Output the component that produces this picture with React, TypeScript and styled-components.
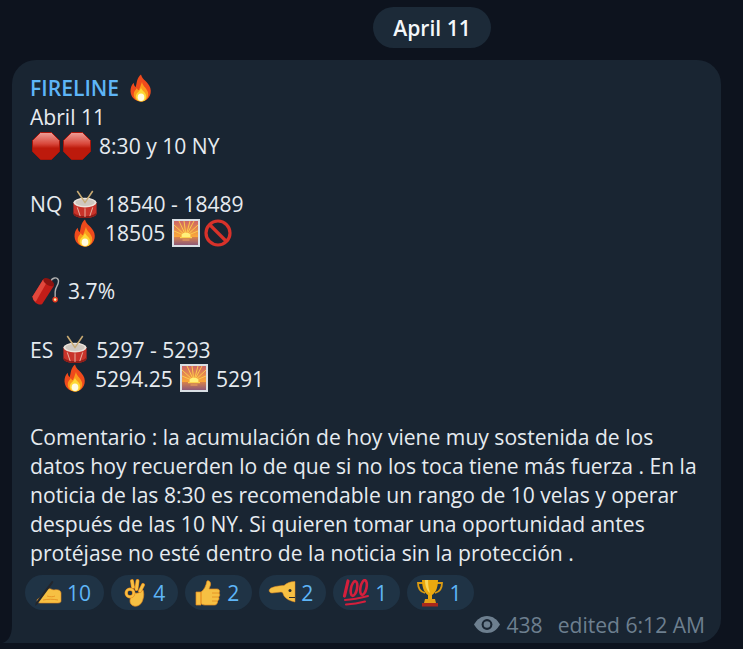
import React from 'react'
import styled, { createGlobalStyle } from 'styled-components'

const colors = {
  page: '#0d131e',
  bubble: '#192532',
  text: '#e6ebf0',
  link: '#5eb5f7',
  pill: '#1f3345',
  meta: '#6d7f8f',
  datePill: '#1c2a38'
}

const GlobalStyle = createGlobalStyle`
  html, body {
    margin: 0;
    padding: 0;
    background: ${colors.page};
    overflow: hidden;
  }
  body {
    font-family: "Open Sans", "DejaVu Sans", sans-serif;
    font-size: 21.1px;
  }
`

const Page = styled.main`
  width: 743px;
  height: 649px;
  display: flex;
  flex-direction: column;
  padding: 7px 22px 6px 12px;
  box-sizing: border-box;
`

const DatePill = styled.div`
  align-self: flex-start;
  margin-left: 361px;
  height: 41px;
  width: 118px;
  border-radius: 21px;
  background: ${colors.datePill};
  color: #f4f7fa;
  font-weight: 600;
  display: flex;
  align-items: center;
  justify-content: center;
`

const Bubble = styled.article`
  position: relative;
  margin-top: 12px;
  flex: 1;
  background: ${colors.bubble};
  border-radius: 24px 24px 24px 0;
  padding: 13px 18px 0 18px;
  display: flex;
  flex-direction: column;
`

const Tail = styled.svg`
  position: absolute;
  left: -10px;
  bottom: 0;
`

const Sender = styled.div`
  height: 29px;
  display: flex;
  align-items: center;
  gap: 8px;
  color: ${colors.link};
  font-weight: 600;
`

const Body = styled.div`
  color: ${colors.text};
`

const Line = styled.div<{ $indent?: number }>`
  height: 29.07px;
  display: flex;
  align-items: center;
  white-space: pre;
  padding-left: ${p => p.$indent ?? 0}px;
`

const Emoji = styled.svg<{ $left?: number; $right?: number }>`
  flex: none;
  width: 28px;
  height: 28px;
  margin-left: ${p => p.$left ?? 0}px;
  margin-right: ${p => p.$right ?? 0}px;
`

const Reactions = styled.div`
  display: flex;
  gap: 7px;
  margin: 8px 0 0 -5px;
`

const Reaction = styled.div`
  height: 35px;
  padding: 0 13px 0 9px;
  border-radius: 18px;
  background: ${colors.pill};
  color: ${colors.link};
  display: flex;
  align-items: center;
  gap: 5px;
`

const ReactionIcon = styled.svg`
  flex: none;
  width: 28px;
  height: 28px;
`

const Meta = styled.div`
  margin: 0 -2px 0 0;
  display: flex;
  justify-content: flex-end;
  align-items: center;
  color: ${colors.meta};
  height: 28px;
`

const Views = styled.span`
  display: inline-flex;
  align-items: center;
  gap: 6px;
  margin-right: 15px;
`

interface IEmojiProps {
  left?: number
  right?: number
}

const Flame: React.FC<IEmojiProps> = ({ left, right }) => (
  <Emoji viewBox="1.5 .5 25 27" $left={left} $right={right}>
    <path d="M14 1c1 5 7 7 9 13 2 7-3 13-9 13S3 22 4 15c.5-3 2-5 3-6 0 2 1 4 2 4 1-4 1-9 5-12z" fill="#ef4a1c" />
    <path d="M15 8c0 4 6 7 6 12 0 4-3 7-7 7s-7-3-7-7c0-3 2-4 3-6 .5 1 1 2 2 2 1-2 2-5 3-8z" fill="#fb9a1d" />
    <path d="M14 14c1 3 5 4 5 8s-2 5-5 5-5-2-5-5 4-5 5-8z" fill="#fdd835" />
    <ellipse cx="14" cy="23" rx="3.2" ry="3.6" fill="#fffbe0" />
  </Emoji>
)

const Stop: React.FC<IEmojiProps> = ({ left, right }) => (
  <Emoji viewBox="0 0 28 28" $left={left} $right={right}>
    <defs>
      <linearGradient id="stopFill" x1="0" y1="0" x2="0" y2="1">
        <stop offset="0" stopColor="#ee9f98" />
        <stop offset="0.42" stopColor="#d8473b" />
        <stop offset="0.58" stopColor="#bd1a0c" />
        <stop offset="1" stopColor="#bd1a0c" />
      </linearGradient>
    </defs>
    <path d="M8.5 .5h11l8 8v11l-8 8h-11l-8-8v-11z" fill="url(#stopFill)" stroke="#a8150a" />
  </Emoji>
)

const Drum: React.FC<IEmojiProps> = ({ left, right }) => (
  <Emoji viewBox="1 0 26 29" $left={left} $right={right}>
    <path d="M6 1l8 12M22 1l-8 12" stroke="#c9ab73" strokeWidth="1.6" />
    <path d="M2 13v11c0 3 5 5 12 5s12-2 12-5V13z" fill="#c9332a" />
    <path d="M2 22c0 3 5 5 12 5s12-2 12-5v2c0 3-5 5-12 5S2 27 2 24z" fill="#8e1d18" />
    <path d="M6 18l3 9M14 19v9M22 18l-3 9" stroke="#e9b4a4" strokeWidth="1" />
    <ellipse cx="14" cy="13" rx="12" ry="5" fill="#ece4dc" />
    <ellipse cx="14" cy="13" rx="10" ry="3.6" fill="#cfc8c0" />
    <path d="M10.500 8l3.500 5 3.500-5" stroke="#c9ab73" strokeWidth="1.400" fill="none" />
  </Emoji>
)

const Sunrise: React.FC<IEmojiProps> = ({ left, right }) => (
  <Emoji viewBox="0 0 28 28" $left={left} $right={right}>
    <defs>
      <linearGradient id="sunSky" x1="0" y1="0" x2="0" y2="1">
        <stop offset="0" stopColor="#c9606a" />
        <stop offset="0.62" stopColor="#f9a63a" />
      </linearGradient>
      <linearGradient id="sunSea" x1="0" y1="0" x2="0" y2="1">
        <stop offset="0" stopColor="#d9824a" />
        <stop offset="1" stopColor="#8e5a78" />
      </linearGradient>
    </defs>
    <rect x="1" y="1" width="26" height="26" fill="url(#sunSky)" stroke="#d9dfe4" strokeWidth="2" />
    <path
      d="M14 17L2 6M14 17L7 2M14 17l-2-15M14 17l4-15M14 17l8-15M14 17L26 6M14 17L2 12M14 17l12-5"
      stroke="#fcc94d"
      strokeWidth="1"
    />
    <ellipse cx="14" cy="17" rx="4.5" ry="3.2" fill="#fff07a" />
    <rect x="2" y="18" width="24" height="8" fill="url(#sunSea)" />
    <rect x="8" y="18" width="12" height="1.2" fill="#fbd24e" />
    <rect x="10.500" y="20.500" width="7" height="1" fill="#f0a85a" />
  </Emoji>
)

const NoEntry: React.FC<IEmojiProps> = ({ left, right }) => (
  <Emoji viewBox="0 0 28 28" $left={left} $right={right}>
    <circle cx="14" cy="14" r="12" fill="none" stroke="#d8322a" strokeWidth="3.2" />
    <path d="M6 6l16 16" stroke="#d8322a" strokeWidth="3.2" />
  </Emoji>
)

const Dynamite: React.FC<IEmojiProps> = ({ left, right }) => (
  <Emoji viewBox="1 1 25 26" $left={left} $right={right}>
    <path d="M18 5c1-3.500 6-4.500 7-1 1 4-3 6-3 11v5" fill="none" stroke="#b0b0b0" strokeWidth="1.300" />
    <path d="M11 3l10 6-11 17c-3 2-9-2-9-7z" fill="#c21d18" />
    <path d="M11 3l3.500 2.500L4 24c-2-1-3-3-3-5z" fill="#e2483c" />
    <ellipse cx="16" cy="5.800" rx="5.700" ry="2.800" transform="rotate(32 16 5.800)" fill="#8c1410" />
    <circle cx="22" cy="22" r="2.600" fill="#e93a20" />
    <circle cx="22" cy="22" r="1.200" fill="#fff2a8" />
  </Emoji>
)

const hand = '#f6c043'
const handEdge = '#e58a1e'

const Writing = () => (
  <ReactionIcon viewBox="0 0 28 28">
    <path d="M4 20c3-1 6-7 10-10 3-1 4 1 6 1 3-1 7 0 7 3v8c0 1-1 2-3 2H6c-2 0-3-1-3-2s0-1.500 1-2z" fill={hand} stroke={handEdge} strokeWidth=".6" />
    <path d="M9 21c5-1 10-1 15 0M13 17c3 1 6 1 8 0" fill="none" stroke={handEdge} strokeWidth=".8" />
    <path d="M1 27l.8-3.500L17.500 2.500c1-1 2.300 0 1.600 1.200L3.500 25z" fill="#22262c" />
  </ReactionIcon>
)

const OkHand = () => (
  <ReactionIcon viewBox="0 0 28 28">
    <path d="M15 14c0 0 4 1 6-2l2-1c1 3 1 6 0 9-1 5-5 8-9 7-4-1-5-5-3-9z" fill={hand} stroke={handEdge} strokeWidth=".7" />
    <path d="M13 8l-1-6M16.500 10l1-8M20 12l3-6" stroke={handEdge} strokeWidth="3.800" strokeLinecap="round" />
    <path d="M13 8l-1-6M16.500 10l1-8M20 12l3-6" stroke={hand} strokeWidth="2.600" strokeLinecap="round" />
    <circle cx="10" cy="14" r="3.800" fill={colors.pill} stroke={handEdge} strokeWidth="3.200" />
    <circle cx="10" cy="14" r="3.800" fill="none" stroke={hand} strokeWidth="2" />
  </ReactionIcon>
)

const ThumbsUp = () => (
  <ReactionIcon viewBox="-1 0 28 28">
    <path d="M1 13h5v13H1zM6 13c3-2 5-6 6-11 2-1 4 1 3.500 4L14 10h8c3 0 3 3 2 4 1 1.500 1 3-.5 4 1 1.500.5 3-1 4 .5 2-1 4-3 4H10c-2 0-4-1-4-2z" fill={hand} stroke={handEdge} strokeWidth=".7" />
    <path d="M17 14h7M17 18h6M17 22h5" stroke={handEdge} strokeWidth=".8" />
  </ReactionIcon>
)

const PointingFace = () => (
  <ReactionIcon viewBox="0 0 28 28">
    <path d="M27 2.500c-5 0-8 1.500-11 4-4 0-10 1-13 2.500-3 1.500-2 5 1 5 3 0 6-1 9-1 2 0 2 2 3 4 2 3 6 5 11 6z" fill={hand} stroke={handEdge} strokeWidth=".5" />
    <circle cx="22" cy="11.500" r="1.500" fill="#2b2b2b" />
    <path d="M21 18.500h6" stroke="#2b2b2b" strokeWidth="1" />
  </ReactionIcon>
)

const Hundred = () => (
  <ReactionIcon viewBox="0 0 28 28">
    <g fill="none" stroke="#d41f3c" strokeLinecap="round">
      <path d="M6 2L2.500 17" strokeWidth="3.200" />
      <ellipse cx="12" cy="9.500" rx="3" ry="7.500" transform="rotate(12 12 9.500)" strokeWidth="2.600" />
      <ellipse cx="21.500" cy="8.500" rx="3" ry="7.500" transform="rotate(12 21.500 8.500)" strokeWidth="2.600" />
      <path d="M3 21c7-.5 15-2 23-4" strokeWidth="2" />
      <path d="M4 25.500c7-.5 13-1.500 19-3" strokeWidth="2" />
    </g>
  </ReactionIcon>
)

const Trophy = () => (
  <ReactionIcon viewBox="0 0 28 28">
    <path d="M7 4H2c0 6 3 9 7 10M21 4h5c0 6-3 9-7 10" fill="none" stroke="#d99a12" strokeWidth="1.800" />
    <path d="M6 1h16c0 9-3 13-6 15v4h-4v-4C9 14 6 10 6 1z" fill="#eba90f" />
    <path d="M9 1h3c0 6 1 10 2 13-3-2-5-7-5-13z" fill="#f9d65a" />
    <path d="M9 20h10l1 4H8z" fill="#e4a017" />
    <rect x="6" y="24" width="16" height="3.500" fill="#a8281c" />
  </ReactionIcon>
)

const Eye = () => (
  <svg width="26" height="17" viewBox="0 0 26 17">
    <path d="M13 0C7 0 3 3.500 0 8.500 3 13.500 7 17 13 17s10-3.500 13-8.500C23 3.500 19 0 13 0z" fill={colors.meta} />
    <circle cx="13" cy="8.500" r="5.400" fill={colors.bubble} />
    <circle cx="13" cy="8.500" r="3.300" fill={colors.meta} />
  </svg>
)

const reactions = [
  { icon: <Writing />, count: 10 },
  { icon: <OkHand />, count: 4 },
  { icon: <ThumbsUp />, count: 2 },
  { icon: <PointingFace />, count: 2 },
  { icon: <Hundred />, count: 1 },
  { icon: <Trophy />, count: 1 }
]

const comment = [
  'Comentario : la acumulación de hoy viene muy sostenida de los',
  'datos hoy recuerden lo de que si no los toca tiene más fuerza . En la',
  'noticia de las 8:30 es recomendable un rango de 10 velas y operar',
  'después de las 10 NY. Si quieren tomar una oportunidad antes',
  'protéjase no esté dentro de la noticia sin la protección .'
]

const App: React.FC = () => (
  <Page>
    <GlobalStyle />
    <DatePill>April 11</DatePill>
    <Bubble>
      <Tail width="12" height="18" viewBox="0 0 12 18">
        <path d="M12 0v18H0c5-1 10-6 10-18z" fill={colors.bubble} />
      </Tail>
      <Sender>
        FIRELINE
        <Flame />
      </Sender>
      <Body>
        <Line>Abril 11</Line>
        <Line>
          <Stop left={2} />
          <Stop left={3} right={8} />
          8:30 y 10 NY
        </Line>
        <Line />
        <Line>
          NQ
          <Drum left={9} right={6} />
          18540 - 18489
        </Line>
        <Line $indent={41}>
          <Flame right={6} />
          18505
          <Sunrise left={7} />
          <NoEntry left={4} />
        </Line>
        <Line />
        <Line>
          <Dynamite left={2} right={8} />
          3.7%
        </Line>
        <Line />
        <Line>
          ES
          <Drum left={8} right={7} />
          5297 - 5293
        </Line>
        <Line $indent={31}>
          <Flame right={6} />
          5294.25
          <Sunrise left={7} right={8} />
          5291
        </Line>
        <Line />
        {comment.map(text => (
          <Line key={text}>{text}</Line>
        ))}
      </Body>
      <Reactions>
        {reactions.map((r, i) => (
          <Reaction key={i}>
            {r.icon}
            {r.count}
          </Reaction>
        ))}
      </Reactions>
      <Meta>
        <Views>
          <Eye />
          438
        </Views>
        edited 6:12 AM
      </Meta>
    </Bubble>
  </Page>
)

export default App
